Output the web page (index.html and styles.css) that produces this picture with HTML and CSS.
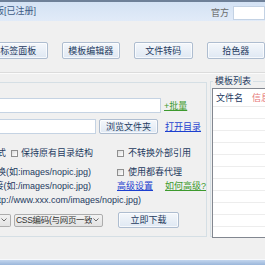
FILE: index.html
```html
<!DOCTYPE html>
<html lang="zh-CN">
<head>
    <meta charset="UTF-8">
    <title>模板下载器</title>
    <link rel="stylesheet" href="styles.css">
</head>
<body>

<div class="titlebar">
    <div class="clip title-text"><span>网页模板下载器 专业版[已注册]</span></div>
    <div class="spacer"></div>
    <span class="site-label">官方</span>
    <div class="site-input"></div>
</div>

<div class="toolbar">
    <div class="btn tool">标签面板</div>
    <div class="btn tool">模板编辑器</div>
    <div class="btn tool">文件转码</div>
    <div class="btn tool">拾色器</div>
</div>

<div class="sep"></div>

<div class="main">
    <fieldset class="opts">
        <div class="row row-url">
            <div class="field url-field"></div>
            <a class="link green">+批量</a>
        </div>
        <div class="row row-dir">
            <div class="field dir-field"></div>
            <div class="btn browse">浏览文件夹</div>
            <a class="link blue">打开目录</a>
        </div>

        <div class="grid">
            <div class="cell">
                <div class="clip w6"><span>图片替换方式</span></div>
                <span class="cb"></span>
                <span>保持原有目录结构</span>
            </div>
            <div class="cell">
                <span class="cb"></span>
                <span>不转换外部引用</span>
            </div>

            <div class="cell">
                <div class="clip w91"><span>相对路径替换(如:images/nopic.jpg)</span></div>
            </div>
            <div class="cell">
                <span class="cb"></span>
                <span>使用都春代理</span>
            </div>

            <div class="cell">
                <div class="clip w91"><span>根目录链接(如:/images/nopic.jpg)</span></div>
            </div>
            <div class="cell links">
                <a class="link blue">高级设置</a>
                <a class="link green">如何高级?</a>
            </div>

            <div class="cell wide">
                <div class="clip w141"><span>绝对地址(如:http://www.xxx.com/images/nopic.jpg)</span></div>
            </div>
        </div>

        <div class="row row-go">
            <div class="combo combo-small">
                <svg class="arrow" width="6" height="4" viewBox="0 0 6 4"><path d="M0.5 0.5 L3 3 L5.5 0.5" fill="none" stroke="#6d6d6d"/></svg>
            </div>
            <div class="combo combo-css">
                <span class="combo-text">CSS编码(与网页一致)</span>
                <svg class="arrow" width="6" height="4" viewBox="0 0 6 4"><path d="M0.5 0.5 L3 3 L5.5 0.5" fill="none" stroke="#6d6d6d"/></svg>
            </div>
            <div class="btn go">立即下载</div>
        </div>
    </fieldset>

    <fieldset class="tpl">
        <legend>模板列表</legend>
        <div class="list">
            <div class="list-head">
                <span class="col-name">文件名</span>
                <span class="col-info">信息</span>
            </div>
            <div class="list-rows"></div>
        </div>
    </fieldset>
</div>

<div class="statusbar"></div>

</body>
</html>
```
FILE: styles.css
```css
body {
    margin: 0;
    width: 265px;
    height: 265px;
    overflow: hidden;
    background-color: #f0f0f0;
    font-family: "Liberation Sans", "Noto Sans CJK SC", sans-serif;
    font-size: 9px;
    line-height: 12px;
    color: #1e3a5f;
}

.clip {
    display: flex;
    justify-content: flex-end;
    overflow: hidden;
    white-space: nowrap;
    flex: none;
}

.titlebar {
    height: 19px;
    border-top: 2px solid #6e8098;
    background: linear-gradient(#d4e2f4, #e1ebf8);
    display: flex;
    align-items: center;
}

.title-text {
    width: 36px;
    color: #3d5b85;
    margin-top: -1px;
}

.spacer {
    flex: 1;
}

.site-label {
    color: #6a6a6a;
    margin-right: 4px;
    margin-top: 3px;
}

.site-input {
    width: 30px;
    height: 12px;
    background-color: #fff;
    border: 1px solid #c3d2e4;
    margin-top: 3px;
}

.toolbar {
    display: flex;
    gap: 14px;
    margin-left: -11px;
    margin-top: 21px;
}

.btn {
    box-sizing: border-box;
    border: 1px solid #aebdd0;
    border-radius: 2px;
    background: linear-gradient(#f4f7fb, #dfe8f3);
    box-shadow: inset 0 0 0 1px rgba(255, 255, 255, 0.7);
    color: #1e3a5f;
    text-align: center;
    display: flex;
    align-items: center;
    justify-content: center;
    white-space: nowrap;
}

.tool {
    width: 61px;
    height: 17px;
}

.sep {
    margin-top: 13px;
    border-top: 1px solid #dcdcdc;
    border-bottom: 1px solid #fbfbfb;
}

.main {
    display: flex;
    margin-top: 8px;
}

.opts {
    box-sizing: border-box;
    width: 212px;
    height: 155px;
    margin: 0;
    padding: 0;
    border: 1px solid #d5dfe5;
    border-left: none;
}

.row {
    display: flex;
    align-items: center;
}

.field {
    box-sizing: border-box;
    height: 15px;
    background-color: #fff;
    border: 1px solid #c5d3e3;
    border-left: none;
}

.row-url {
    margin-top: 15px;
}

.url-field {
    width: 161px;
}

.row-dir {
    margin-top: 6px;
}

.dir-field {
    width: 96px;
}

.browse {
    width: 59px;
    height: 15px;
    margin-left: 3px;
}

.link {
    text-decoration: underline;
    cursor: pointer;
}

.green {
    color: #3d9a2e;
}

.blue {
    color: #1c3fcf;
}

.row-url .link {
    margin-left: 3px;
}

.row-dir .link {
    margin-left: 7px;
}

.grid {
    display: grid;
    grid-template-columns: 117px 1fr;
    row-gap: 2px;
    margin-top: 13px;
}

.cell {
    display: flex;
    align-items: center;
    height: 12px;
    white-space: nowrap;
}

.cell:nth-child(3),
.cell:nth-child(4) {
    margin-top: 5px;
}

.wide {
    grid-column: 1 / 3;
}

.w6 {
    width: 6px;
}

.w91 {
    width: 91px;
}

.w141 {
    width: 141px;
}

.cb {
    box-sizing: border-box;
    width: 7px;
    height: 7px;
    border: 1px solid #8f8f8f;
    background: linear-gradient(135deg, #dcdcdc, #fff);
    margin-left: 5px;
    margin-right: 3px;
    flex: none;
}

.cell:nth-child(even) .cb {
    margin-left: 0;
    margin-right: 4px;
}

.links .link + .link {
    margin-left: 12px;
}

.row-go {
    margin-top: 6px;
}

.combo {
    box-sizing: border-box;
    height: 13px;
    border: 1px solid #adadad;
    border-radius: 2px;
    background: linear-gradient(#f2f2f2, #e3e3e3);
    display: flex;
    align-items: center;
    justify-content: flex-end;
    overflow: hidden;
    color: #333;
}

.combo-small {
    width: 11px;
    border-left: none;
    border-radius: 0 2px 2px 0;
}

.combo-css {
    width: 89px;
    margin-left: 3px;
    padding-left: 1px;
}

.combo-text {
    flex: 1;
    min-width: 0;
    white-space: nowrap;
    overflow: hidden;
    font-size: 8.5px;
    letter-spacing: -0.3px;
}

.arrow {
    flex: none;
    margin: 0 3px 0 1px;
}

.go {
    width: 61px;
    height: 16px;
    margin-left: 15px;
}

.tpl {
    box-sizing: border-box;
    flex: 1;
    height: 162px;
    margin: -7px 0 0 3px;
    padding: 0;
    border: 1px solid #d5dfe5;
    border-right: none;
}

.tpl legend {
    padding: 0 2px;
    margin-left: 2px;
    color: #1e3a5f;
}

.list {
    box-sizing: border-box;
    height: 150px;
    margin-left: 1px;
    margin-top: 1px;
    background-color: #fff;
    border: 1px solid #828790;
    border-right: none;
}

.list-head {
    display: flex;
    height: 17px;
    align-items: center;
    padding-left: 3px;
    border-bottom: 1px solid #eaeaea;
    white-space: nowrap;
}

.col-name {
    width: 36px;
    flex: none;
}

.col-info {
    color: #e57373;
}

.list-rows {
    height: 128px;
    background: repeating-linear-gradient(#fff 0, #fff 11px, #ededed 11px, #ededed 12px);
}

.statusbar {
    margin-top: 22px;
    height: 7px;
    border-top: 1px solid #f7f9fc;
    background: linear-gradient(#c3d6ee, #8aa9d2);
}
```
